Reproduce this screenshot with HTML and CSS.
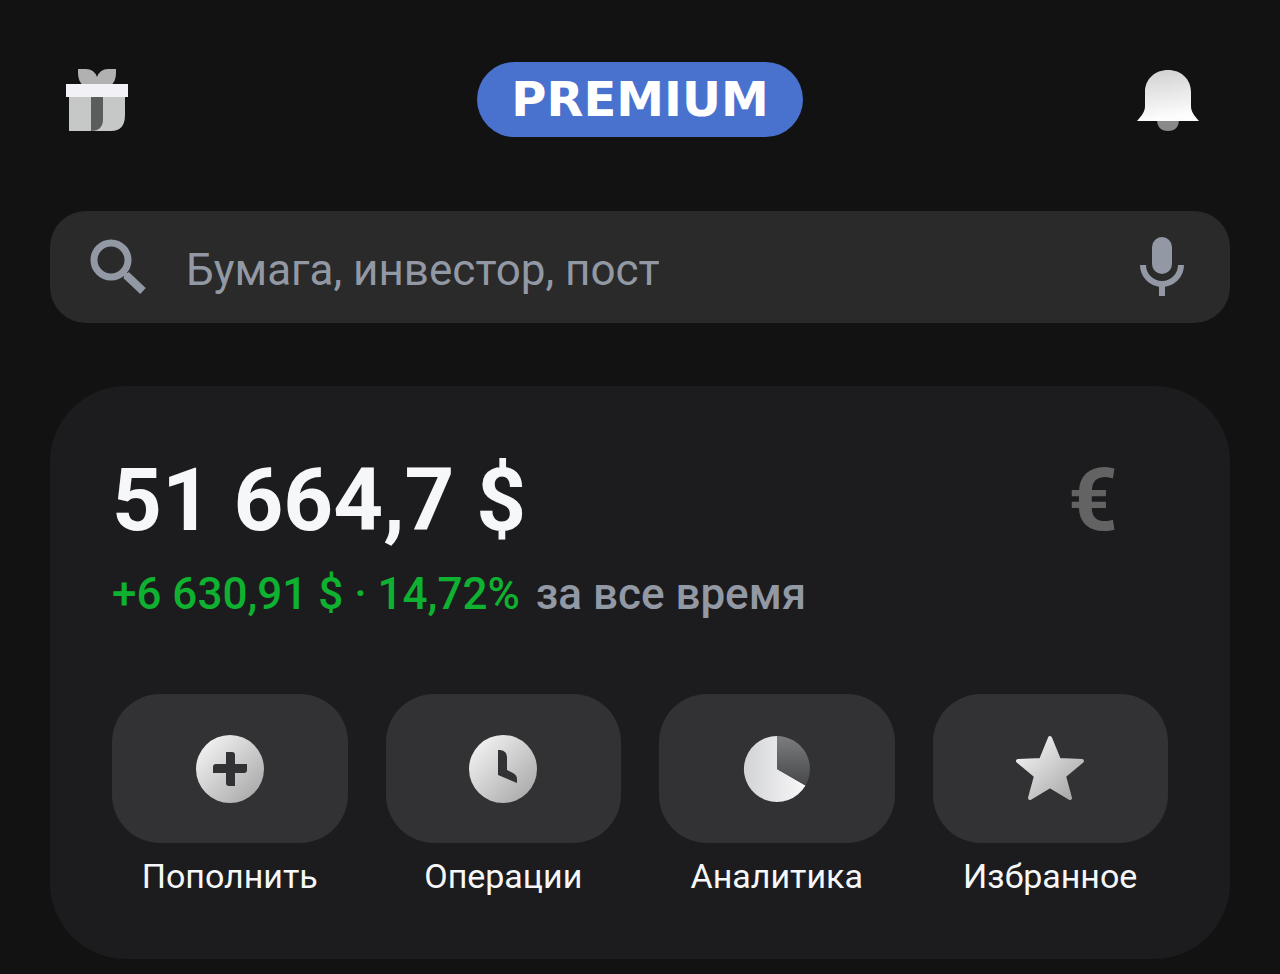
FILE: index.html
```html
<!DOCTYPE html>
<html lang="ru">
<head>
    <meta charset="UTF-8">
    <meta name="viewport" content="width=device-width, initial-scale=1.0">
    <link rel="stylesheet" href="styles.css">
    <title>Портфель</title>
</head>
<body>
    <header class="header">
        <button class="icon-btn gift" type="button" aria-label="Подарки">
            <svg width="64" height="64" viewBox="0 0 64 64">
                <path d="M13 1h8q8 0 11 8q3-8 11-8h8v4q0 9-6 13H19Q13 14 13 5z" fill="#b1b1b1"/>
                <path d="M4 29h56v18q0 16-14 16H4z" fill="#c6c8c7"/>
                <path d="M26 29h12v22q0 12-12 12z" fill="#5b5d5c"/>
                <path d="M1 16h62v13H1z" fill="#f2f2f6"/>
            </svg>
        </button>
        <div class="premium">PREMIUM</div>
        <button class="icon-btn bell" type="button" aria-label="Уведомления">
            <svg width="64" height="64" viewBox="0 0 64 64">
                <defs>
                    <linearGradient id="bellFill" x1="0" y1="0" x2="0.2" y2="1">
                        <stop offset="0" stop-color="#cfcfcf"/>
                        <stop offset="1" stop-color="#fdfdfd"/>
                    </linearGradient>
                </defs>
                <path d="M21 51h22q0 12-11 12T21 51z" fill="#8a8a8a"/>
                <path d="M32 2c13 0 23 9 23 22v14c0 6 3 9 8 15H1c5-6 8-9 8-15V24C9 11 19 2 32 2z" fill="url(#bellFill)"/>
            </svg>
        </button>
    </header>

    <form class="search" role="search">
        <svg class="search-icon" width="56" height="56" viewBox="0 0 56 56" fill="none" stroke="#9299a5">
            <circle cx="21" cy="21" r="17" stroke-width="7"/>
            <path d="M36 36L53 52" stroke-width="8"/>
            <path d="M32 32L38 38" stroke-width="5"/>
        </svg>
        <input class="search-input" type="search" placeholder="Бумага, инвестор, пост" aria-label="Поиск">
        <button class="icon-btn" type="button" aria-label="Голосовой поиск">
            <svg width="44" height="60" viewBox="0 0 44 60">
                <rect x="12" y="0" width="20" height="37" rx="10" fill="#9299a5"/>
                <path d="M3 28a19 19 0 0 0 38 0M22 47v12" fill="none" stroke="#9299a5" stroke-width="6"/>
            </svg>
        </button>
    </form>

    <main class="card">
        <div class="balance">
            <h1 class="amount">51 664,7 $</h1>
            <button class="currency" type="button" aria-label="Показать в евро">€</button>
        </div>
        <p class="profit"><span class="profit-value">+6 630,91 $ · 14,72%</span><span>за все время</span></p>

        <div class="actions">
            <button class="action" type="button">
                <span class="tile">
                    <svg width="70" height="70" viewBox="0 0 70 70">
                        <defs>
                            <linearGradient id="silver" x1="0.1" y1="0.1" x2="0.9" y2="0.9">
                                <stop offset="0" stop-color="#f2f2f3"/>
                                <stop offset="1" stop-color="#aaaaaa"/>
                            </linearGradient>
                        </defs>
                        <circle cx="35" cy="35" r="34" fill="url(#silver)"/>
                        <path d="M31 18h6q3 0 3 3v9h12v6q0 3-3 3h-9v13h-6q-3 0-3-3V39H18v-6q0-3 3-3h10z" fill="#323234"/>
                    </svg>
                </span>
                <span class="action-label">Пополнить</span>
            </button>
            <button class="action" type="button">
                <span class="tile">
                    <svg width="70" height="70" viewBox="0 0 70 70">
                        <circle cx="35" cy="35" r="34" fill="url(#silver)"/>
                        <path d="M30 16h2q7 1 7 7v13l6 3q4 2 4 6v4L30 41z" fill="#323234"/>
                    </svg>
                </span>
                <span class="action-label">Операции</span>
            </button>
            <button class="action" type="button">
                <span class="tile">
                    <svg width="70" height="70" viewBox="0 0 70 70">
                        <defs>
                            <linearGradient id="pieLight" x1="0" y1="0" x2="1" y2="0">
                                <stop offset="0" stop-color="#d2d3d5"/>
                                <stop offset="1" stop-color="#f8f8f9"/>
                            </linearGradient>
                            <linearGradient id="pieDark" x1="0" y1="0" x2="0" y2="1">
                                <stop offset="0" stop-color="#7c7d7f"/>
                                <stop offset="1" stop-color="#464749"/>
                            </linearGradient>
                        </defs>
                        <path d="M35 35V2A33 33 0 1 0 63.500 51.500z" fill="url(#pieLight)"/>
                        <path d="M35 35V2A33 33 0 0 1 63.500 51.500z" fill="url(#pieDark)"/>
                    </svg>
                </span>
                <span class="action-label">Аналитика</span>
            </button>
            <button class="action" type="button">
                <span class="tile">
                    <svg width="70" height="70" viewBox="0 0 70 70">
                        <path d="M35 4l9 22 23 1-18 15 6 22-20-12-20 12 6-22L3 27l23-1z" fill="url(#silver)" stroke="url(#silver)" stroke-width="4" stroke-linejoin="round"/>
                    </svg>
                </span>
                <span class="action-label">Избранное</span>
            </button>
        </div>
    </main>
</body>
</html>
```
FILE: styles.css
```css
* {
    box-sizing: border-box;
}

body {
    font-family: Roboto, sans-serif;
    background-color: #121212;
    color: #f6f7f9;
    margin: 0;
    padding: 62px 50px 16px;
}

button {
    font-family: inherit;
    color: inherit;
    background: none;
    border: none;
    padding: 0;
    cursor: pointer;
}

svg {
    display: block;
}

.header {
    display: grid;
    grid-template-columns: 1fr auto 1fr;
    align-items: center;
    margin-bottom: 74px;
}

.gift {
    justify-self: start;
    margin-left: 15px;
}

.bell {
    justify-self: end;
    margin-right: 30px;
}

.premium {
    padding: 0 34px;
    border-radius: 38px;
    background-color: #4872ce;
    color: #fff;
    font-family: "DejaVu Sans", sans-serif;
    font-size: 48px;
    font-weight: bold;
    line-height: 75px;
}

.search {
    display: flex;
    align-items: center;
    height: 112px;
    padding: 0 46px 0 40px;
    margin-bottom: 63px;
    border-radius: 36px;
    background-color: #2a2a2a;
}

.search-icon {
    flex: none;
}

.search-input {
    flex: 1;
    min-width: 0;
    margin: 0 40px;
    padding: 6px 0 0;
    border: none;
    outline: none;
    background: none;
    color: #f6f7f9;
    font-family: inherit;
    font-size: 44px;
    line-height: 52px;
}

.search-input::placeholder {
    color: #9299a5;
    opacity: 1;
}

.card {
    padding: 62px;
    border-radius: 76px;
    background-color: #1c1c1e;
}

.balance {
    display: flex;
    align-items: center;
    justify-content: space-between;
    margin-bottom: 16px;
}

.amount,
.currency {
    margin: 0;
    font-size: 87px;
    font-weight: bold;
    line-height: 104px;
}

.currency {
    margin-right: 50px;
    color: #636363;
}

.profit {
    display: flex;
    flex-wrap: wrap;
    gap: 16px;
    margin: 0 0 74px;
    color: #9299a5;
    font-size: 44px;
    font-weight: 500;
    line-height: 52px;
}

.profit-value {
    color: #0fb130;
}

.actions {
    display: grid;
    grid-template-columns: repeat(4, 1fr);
    gap: 38px;
}

.action {
    display: flex;
    flex-direction: column;
    gap: 12px;
}

.tile {
    display: flex;
    align-items: center;
    justify-content: center;
    width: 100%;
    height: 149px;
    border-radius: 48px;
    background-color: #323234;
}

.action:hover .tile {
    background-color: #3c3c3f;
}

.action-label {
    align-self: center;
    font-size: 34px;
    line-height: 42px;
}
```
